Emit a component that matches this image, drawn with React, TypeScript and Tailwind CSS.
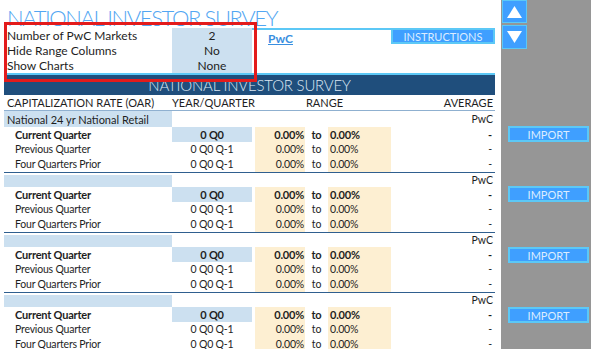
import React from 'react';

// one block of survey rows
interface Block {
  title: string;
}

const blocks: Block[] = [
  { title: 'National 24 yr National Retail' },
  { title: '' },
  { title: '' },
  { title: '' },
];

const rows = [
  { label: 'Current Quarter', year: '0 Q0', bold: true },
  { label: 'Previous Quarter', year: '0 Q0 Q-1', bold: false },
  { label: 'Four Quarters Prior', year: '0 Q0 Q-1', bold: false },
];

const SurveyBlock: React.FC<{ block: Block; first: boolean }> = ({ block, first }) => {
  return (
    <div className="border-b border-[#2f5f8f]">
      {first ? (
        <div className="flex h-[16px] items-center">
          <div className="w-[168px] h-full bg-[#cce0f0] pl-[3px] flex items-center text-[11px]">{block.title}</div>
          <div className="flex-1 text-right pr-[2px] text-[10.5px]">PwC</div>
        </div>
      ) : (
        <div className="flex h-[14px] items-end">
          <div className="w-[168px] h-[12px] bg-[#cce0f0]" />
          <div className="flex-1 text-right pr-[2px] text-[10.5px] self-center leading-none">PwC</div>
        </div>
      )}
      {rows.map((r, i) => (
        <div
          key={i}
          className={`flex h-[15px] items-center ${r.bold ? 'font-bold text-[11px] tracking-[-0.2px]' : 'text-[10.5px] tracking-[-0.2px]'}`}
        >
          <div className="w-[168px] pl-[11px]">{r.label}</div>
          <div className={`w-[80px] h-full flex items-center justify-center ${r.bold ? 'bg-[#cce0f0]' : ''}`}>{r.year}</div>
          <div className="w-[3px]" />
          <div className="w-[50px] h-full bg-[#fdefd2] flex items-center justify-end pr-[1px]">0.00%</div>
          <div className="w-[23px] text-center">to</div>
          <div className="w-[63px] h-full bg-[#fdefd2] flex items-center pl-[2px]">0.00%</div>
          <div className="flex-1 text-right pr-[3px]">-</div>
        </div>
      ))}
    </div>
  );
};

const ImportButton: React.FC<{ className?: string }> = ({ className }) => (
  <div className={`ml-[7px] w-[81px] h-[16px] bg-[#3f9fff] border-2 border-[#5cc8f6] flex items-center justify-center text-[11px] text-[#dcecff] ${className || ''}`}>
    IMPORT
  </div>
);

export default function App() {
  return (
    <div className="flex w-[591px] h-[349px] overflow-hidden bg-white font-['Lato',sans-serif] text-[12px] text-[#1e1e1e] leading-none">
      <div className="relative w-[501px] h-full">
        {/* title */}
        <div className="h-[28px] pl-[7px] flex items-end">
          <span className="text-[22px] font-light text-[#52a6f2] tracking-[-1.4px] leading-none translate-y-[1px]">NATIONAL INVESTOR SURVEY</span>
        </div>

        {/* settings */}
        <div className="ml-[4px] w-[491px] flex h-[45px]">
          <div className="w-[248px] flex flex-col">
            {[
              ['Number of PwC Markets', '2'],
              ['Hide Range Columns', 'No'],
              ['Show Charts', 'None'],
            ].map(([k, v]) => (
              <div key={k} className="flex h-[15px] items-center">
                <div className="w-[168px] pl-[3px]">{k}</div>
                <div className="w-[80px] h-full bg-[#cce0f0] flex items-center justify-center">{v}</div>
              </div>
            ))}
          </div>
          <div className="flex-1 border-t-2 border-[#5cc8f6] flex items-start">
            <div className="ml-[16px] mt-[2px] text-[#3a8fe0] font-bold underline text-[12px] leading-[13px]">PwC</div>
            <div className="ml-auto w-[104px] h-[16px] -mt-[2px] bg-[#3f9fff] border-2 border-[#5cc8f6] flex items-center justify-center text-[11px] text-[#dcecff]">
              INSTRUCTIONS
            </div>
          </div>
        </div>

        {/* header bar */}
        <div className="ml-[4px] w-[491px] border-t-2 border-[#5cc8f6] h-[22px] bg-[#1f4e7c] flex items-center justify-center text-[15px] font-light text-[#dbe6f2] tracking-[-0.2px]">
          NATIONAL INVESTOR SURVEY
        </div>

        {/* column headers */}
        <div className="ml-[4px] w-[491px] flex h-[16px] items-center border-b border-[#8fb0d0] text-[11px]">
          <div className="w-[168px] pl-[3px]">CAPITALIZATION RATE (OAR)</div>
          <div className="w-[80px] text-center">YEAR/QUARTER</div>
          <div className="w-[139px] text-center pl-[6px]">RANGE</div>
          <div className="flex-1 text-right pr-[2px]">AVERAGE</div>
        </div>

        <div className="ml-[4px] w-[491px]">
          {blocks.map((b, i) => (
            <SurveyBlock key={i} block={b} first={i === 0} />
          ))}
        </div>

        {/* highlight box */}
        <div className="absolute left-[4px] top-[22px] w-[253px] h-[60px] border-[3px] border-[#e31b1b]" />
      </div>

      <div className="w-[90px] h-full bg-[#969696] flex flex-col">
        <div className="ml-[1px] w-[25px] h-[23px] bg-[#3f9fff] border border-[#5cc8f6] flex items-center justify-center">
          <svg width="15" height="12" viewBox="0 0 15 12"><polygon points="7.5,0 15,12 0,12" fill="#fff" /></svg>
        </div>
        <div className="ml-[1px] mt-[2px] w-[25px] h-[24px] bg-[#3f9fff] border border-[#5cc8f6] flex items-center justify-center">
          <svg width="15" height="12" viewBox="0 0 15 12"><polygon points="0,0 15,0 7.5,12" fill="#fff" /></svg>
        </div>
        <ImportButton className="mt-[77px]" />
        <ImportButton className="mt-[44px]" />
        <ImportButton className="mt-[45px]" />
        <ImportButton className="mt-[44px]" />
      </div>
    </div>
  );
}
